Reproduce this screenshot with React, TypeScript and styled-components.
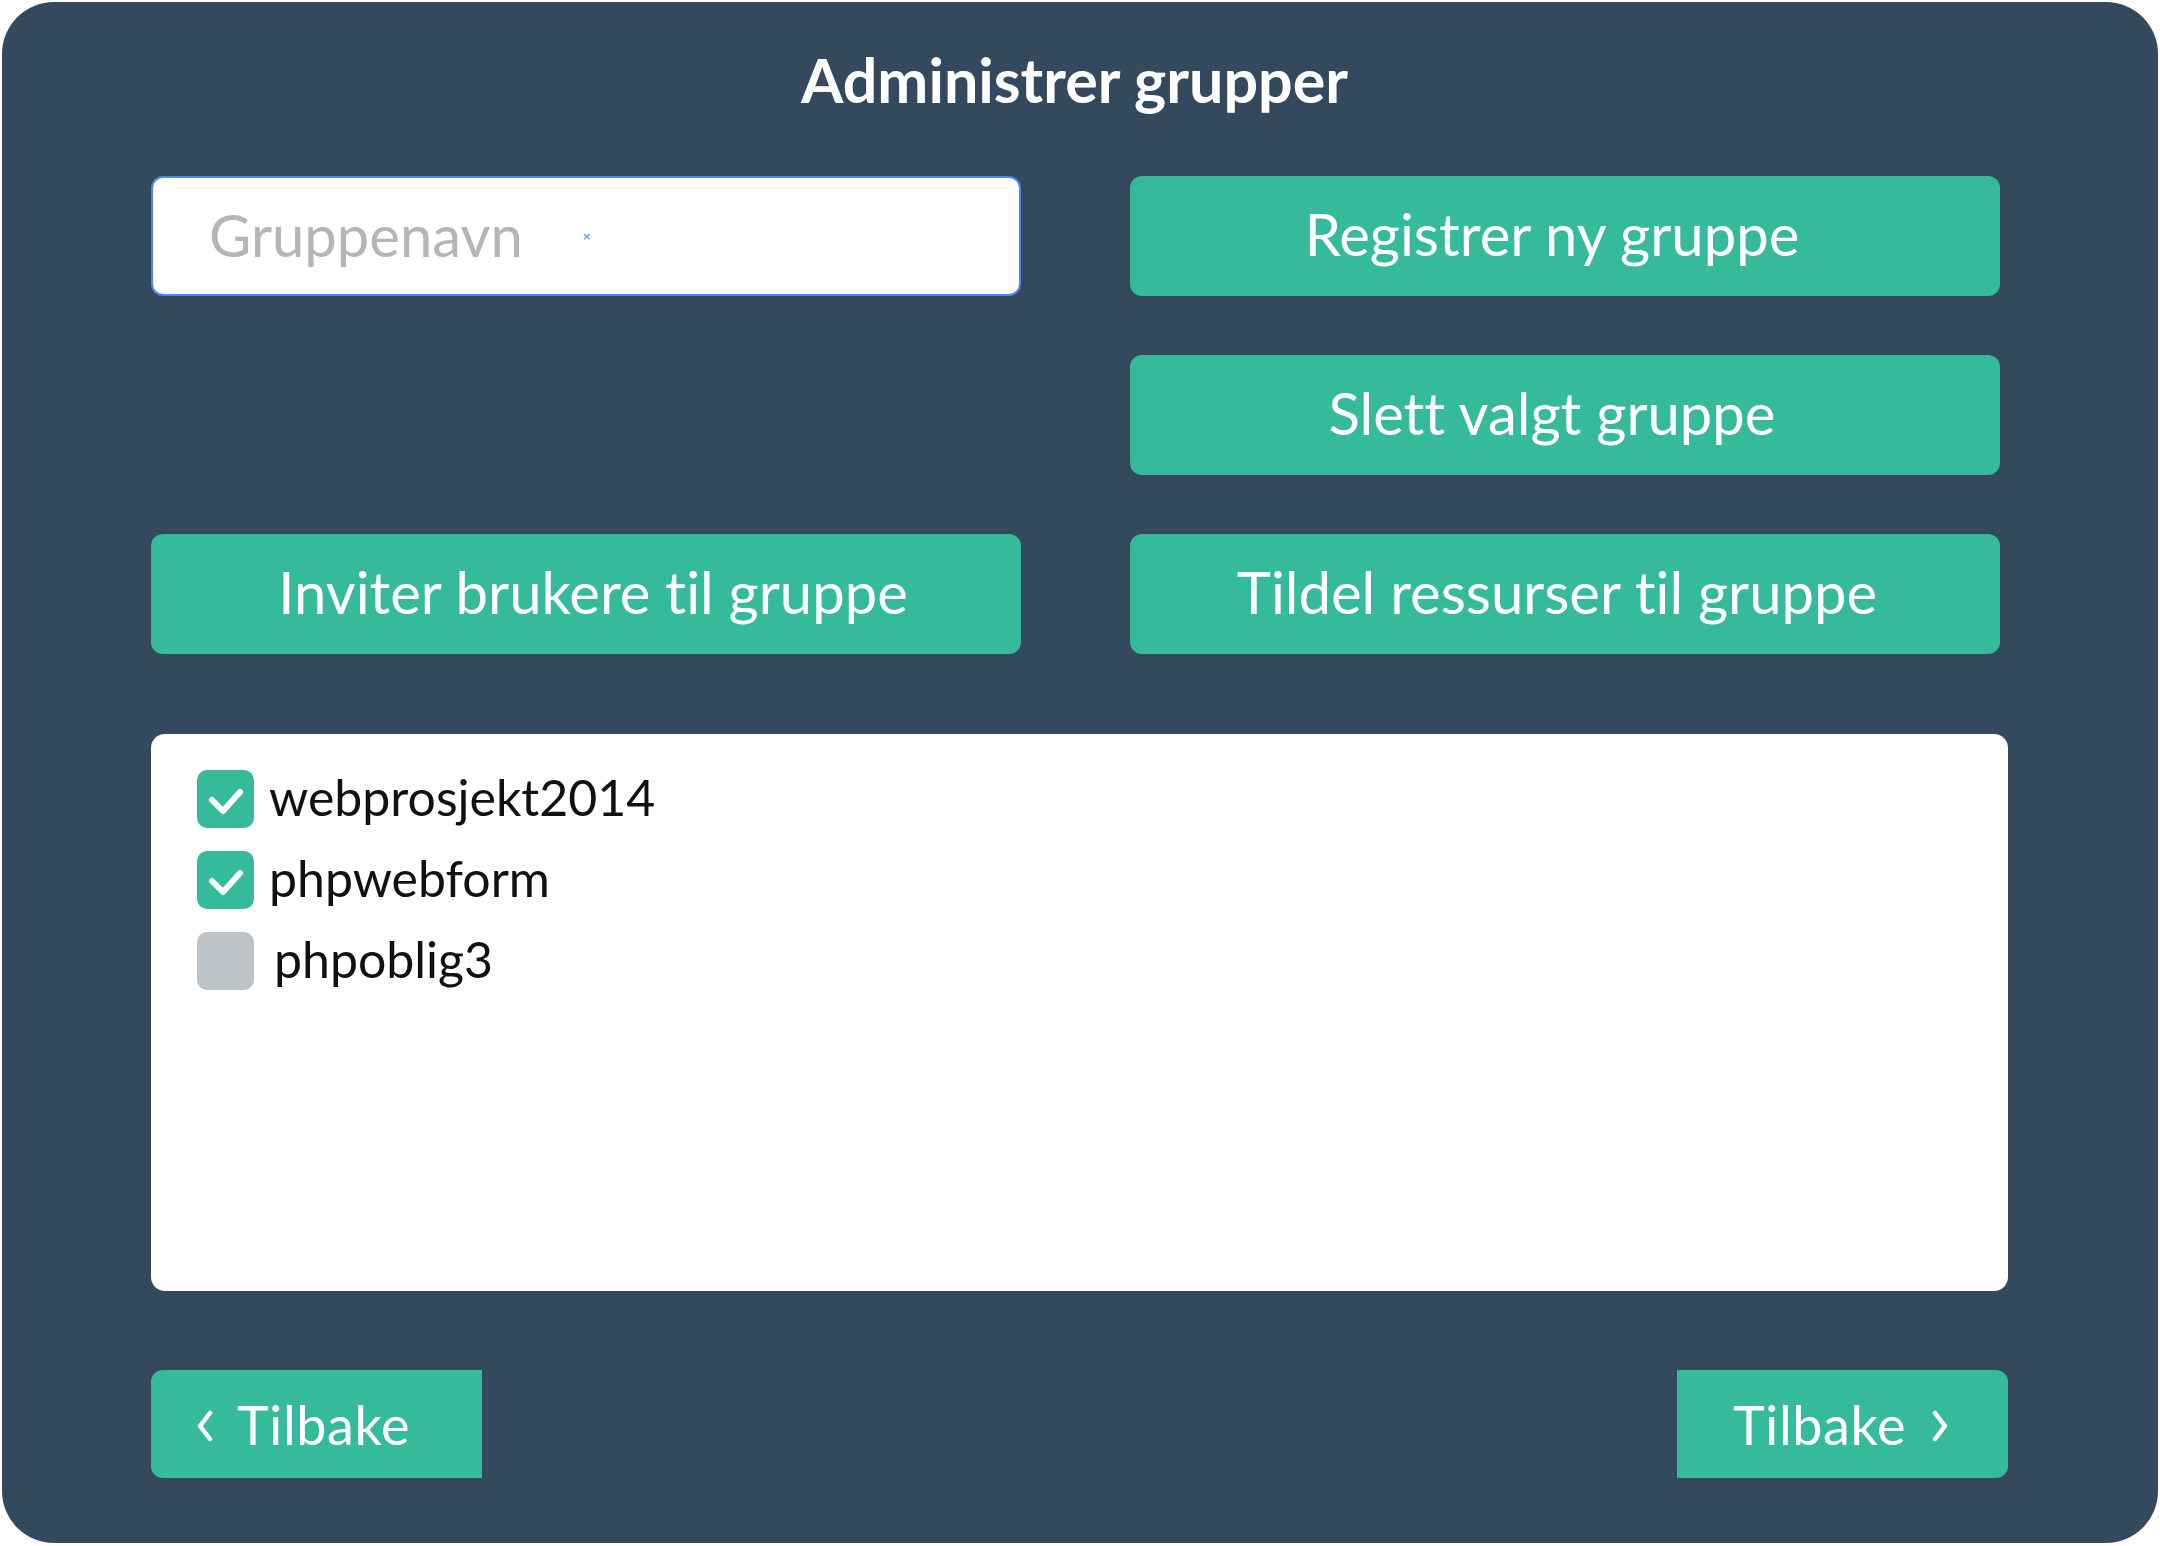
import React from "react";
import styled, { createGlobalStyle } from "styled-components";

const Global = createGlobalStyle`
  html, body { margin: 0; padding: 0; background: #ffffff; }
  body { font-family: Lato, "Noto Sans", sans-serif; font-variant-ligatures: none; }
  * { box-sizing: border-box; }
  button, input { font-variant-ligatures: none; }
`;

const TEAL = "#35ba9b";

const Panel = styled.main`
  margin: 2px 0 0 2px;
  width: 2156px;
  height: 1541px;
  border-radius: 52px;
  background: #34495e;
  padding: 48px 150px 65px 149px;
  display: flex;
  flex-direction: column;
`;

const Title = styled.h1`
  margin: 0;
  font-family: Lato, sans-serif;
  font-weight: 700;
  font-size: 61px;
  line-height: 60px;
  color: #ffffff;
  text-align: center;
  padding-right: 10px;
`;

const ActionGrid = styled.section`
  margin-top: 66px;
  width: 1849px;
  display: grid;
  grid-template-columns: 870px 870px;
  grid-template-rows: repeat(3, 120px);
  column-gap: 109px;
  row-gap: 59px;
`;

const Field = styled.label<{ $col: number; $row: number }>`
  grid-column: ${(p) => p.$col};
  grid-row: ${(p) => p.$row};
  display: flex;
  align-items: center;
  background: #ffffff;
  border: 2px solid #4a84f5;
  border-radius: 12px;
  padding: 0 0 4px 56px;
`;

const TextInput = styled.input`
  width: 373px;
  border: none;
  outline: none;
  background: transparent;
  padding: 0;
  font-family: Lato, sans-serif;
  font-size: 58px;
  color: #333;
  &::placeholder { color: #b5b5b5; }
`;

const ClearMark = styled.span`
  font-family: "DejaVu Sans", sans-serif;
  font-size: 11px;
  line-height: 1;
  color: #4a84f5;
  margin-top: 4px;
`;

const ActionButton = styled.button<{ $col: number; $row: number; $shift: number }>`
  grid-column: ${(p) => p.$col};
  grid-row: ${(p) => p.$row};
  border: none;
  border-radius: 12px;
  background: ${TEAL};
  color: #ffffff;
  font-family: Lato, sans-serif;
  font-weight: 400;
  font-size: 58px;
  padding: 0 ${(p) => (p.$shift < 0 ? -2 * p.$shift : 0)}px 6px ${(p) => (p.$shift > 0 ? 2 * p.$shift : 0)}px;
  cursor: pointer;
`;

const GroupList = styled.ul`
  margin: 80px 0 0 0;
  height: 557px;
  list-style: none;
  background: #ffffff;
  border-radius: 14px;
  padding: 36px 0 0 46px;
  display: flex;
  flex-direction: column;
  gap: 23px;
`;

const GroupRow = styled.li`
  display: flex;
  align-items: center;
  gap: 15px;
  height: 58px;
`;

const Box = styled.span<{ $checked: boolean }>`
  width: 57px;
  height: 58px;
  border-radius: 10px;
  background: ${(p) => (p.$checked ? TEAL : "#bdc3c7")};
  display: flex;
  align-items: center;
  justify-content: center;
  flex: none;
`;

const GroupName = styled.span<{ $shift?: number }>`
  font-family: Lato, sans-serif;
  font-size: 50px;
  color: #111111;
  margin-left: ${(p) => p.$shift ?? 0}px;
  padding-bottom: 4px;
`;

const NavRow = styled.nav`
  margin-top: 79px;
  display: flex;
  justify-content: space-between;
`;

const NavButton = styled.button<{ $side: "left" | "right" }>`
  width: 331px;
  height: 108px;
  border: none;
  background: ${TEAL};
  color: #ffffff;
  border-radius: ${(p) => (p.$side === "left" ? "12px 0 0 12px" : "0 12px 12px 0")};
  display: flex;
  align-items: center;
  gap: ${(p) => (p.$side === "left" ? "24px" : "26px")};
  padding: 0 0 0 ${(p) => (p.$side === "left" ? "46px" : "56px")};
  font-family: Lato, sans-serif;
  font-size: 54px;
  letter-spacing: 0.6px;
  cursor: pointer;
`;

const Chevron = ({ dir }: { dir: "left" | "right" }) => (
  <svg width="16" height="34" viewBox="0 0 16 34" style={{ flex: "none", marginTop: 4 }}>
    <polyline
      points={dir === "left" ? "13,4 3,17 13,30" : "3,4 13,17 3,30"}
      fill="none"
      stroke="#ffffff"
      strokeWidth="4.5"
      strokeLinecap="round"
      strokeLinejoin="round"
    />
  </svg>
);

const Check = () => (
  <svg width="57" height="58" viewBox="0 0 57 58">
    <polyline
      points="15,30 26,41 43,22"
      fill="none"
      stroke="#ffffff"
      strokeWidth="6"
      strokeLinecap="round"
      strokeLinejoin="round"
    />
  </svg>
);

const groups = [
  { name: "webprosjekt2014", checked: true, shift: 0 },
  { name: "phpwebform", checked: true, shift: 0 },
  { name: "phpoblig3", checked: false, shift: 5 },
];

export default function App() {
  return (
    <>
      <Global />
      <Panel>
        <Title>Administrer grupper</Title>
        <ActionGrid>
          <Field $col={1} $row={1}>
            <TextInput placeholder="Gruppenavn" />
            <ClearMark>×</ClearMark>
          </Field>
          <ActionButton $col={2} $row={1} $shift={-13}>Registrer ny gruppe</ActionButton>
          <ActionButton $col={2} $row={2} $shift={-13}>Slett valgt gruppe</ActionButton>
          <ActionButton $col={1} $row={3} $shift={7}>Inviter brukere til gruppe</ActionButton>
          <ActionButton $col={2} $row={3} $shift={-8}>Tildel ressurser til gruppe</ActionButton>
        </ActionGrid>
        <GroupList>
          {groups.map((g) => (
            <GroupRow key={g.name}>
              <Box $checked={g.checked}>{g.checked && <Check />}</Box>
              <GroupName $shift={g.shift}>{g.name}</GroupName>
            </GroupRow>
          ))}
        </GroupList>
        <NavRow>
          <NavButton $side="left">
            <Chevron dir="left" />
            Tilbake
          </NavButton>
          <NavButton $side="right">
            Tilbake
            <Chevron dir="right" />
          </NavButton>
        </NavRow>
      </Panel>
    </>
  );
}
